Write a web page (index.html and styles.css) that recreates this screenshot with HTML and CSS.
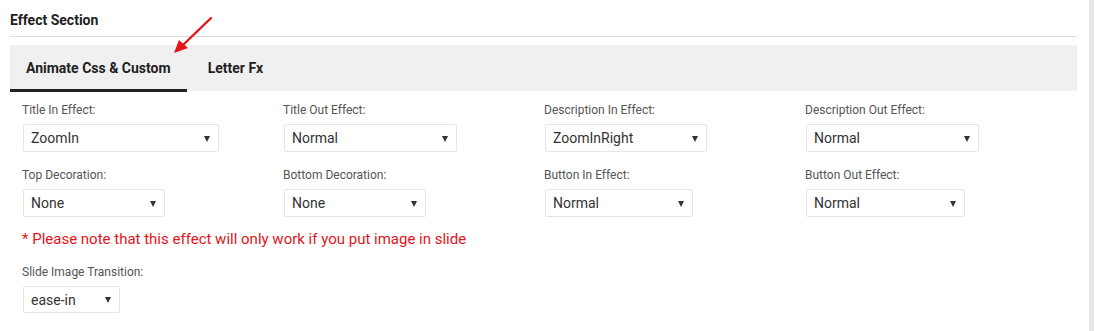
FILE: index.html
```html
<!DOCTYPE html>
<html lang="en">
<head>
    <meta charset="UTF-8">
    <meta name="viewport" content="width=device-width, initial-scale=1.0">
    <title>Effect Section</title>
    <link rel="stylesheet" href="styles.css">
</head>
<body>

<div class="page">
    <div class="panel">
        <h3 class="section-title">Effect Section</h3>

        <div class="tabs">
            <div class="tab active">Animate Css &amp; Custom</div>
            <div class="tab">Letter Fx</div>
        </div>

        <div class="fields">
            <div class="field">
                <label>Title In Effect:</label>
                <div class="select w196"><span>ZoomIn</span><i class="caret"></i></div>
            </div>
            <div class="field">
                <label>Title Out Effect:</label>
                <div class="select w173"><span>Normal</span><i class="caret"></i></div>
            </div>
            <div class="field">
                <label>Description In Effect:</label>
                <div class="select w162"><span>ZoomInRight</span><i class="caret"></i></div>
            </div>
            <div class="field">
                <label>Description Out Effect:</label>
                <div class="select w173"><span>Normal</span><i class="caret"></i></div>
            </div>

            <div class="field">
                <label>Top Decoration:</label>
                <div class="select w142"><span>None</span><i class="caret"></i></div>
            </div>
            <div class="field">
                <label>Bottom Decoration:</label>
                <div class="select w142"><span>None</span><i class="caret"></i></div>
            </div>
            <div class="field">
                <label>Button In Effect:</label>
                <div class="select w148"><span>Normal</span><i class="caret"></i></div>
            </div>
            <div class="field">
                <label>Button Out Effect:</label>
                <div class="select w159"><span>Normal</span><i class="caret"></i></div>
            </div>
        </div>

        <p class="note">* Please note that this effect will only work if you put image in slide</p>

        <div class="field single">
            <label>Slide Image Transition:</label>
            <div class="select w97"><span>ease-in</span><i class="caret"></i></div>
        </div>

        <!-- annotation arrow pointing at the active tab -->
        <svg class="pointer" width="60" height="50" viewBox="0 0 60 50">
            <line x1="51" y1="8" x2="22" y2="36" stroke="#e3151a" stroke-width="2.4" stroke-linecap="round"/>
            <polygon points="14,43 19,30 28,38" fill="#e3151a"/>
        </svg>
    </div>
    <div class="scrollbar"></div>
</div>

</body>
</html>
```

FILE: styles.css
```css
* {
    box-sizing: border-box;
}

body {
    font-family: Roboto, "Open Sans", sans-serif;
    margin: 0;
    background: #fff;
    color: #333;
}

.page {
    display: flex;
    height: 331px;
    overflow: hidden;
}

.panel {
    position: relative;
    flex: 1;
    padding: 0 12px 0 10px;
}

.scrollbar {
    width: 5px;
    background: #e6e6e6;
}

.section-title {
    font-size: 14px;
    font-weight: 700;
    color: #222;
    margin: 0;
    padding: 12px 0 8px;
    line-height: 16px;
    border-bottom: 1px solid #dcdcdc;
}

.tabs {
    display: flex;
    background: #f0f0f0;
    height: 46px;
    margin-top: 8px;
}

.tab {
    font-size: 14px;
    font-weight: 700;
    color: #222;
    line-height: 44px;
    padding: 0 16px;
    border-bottom: 3px solid transparent;
    height: 47px;
    padding-top: 1px;
}

.tab.active {
    border-bottom-color: #222;
}

.tab + .tab {
    padding-left: 21px;
}

.fields {
    display: grid;
    grid-template-columns: repeat(4, 261px);
    row-gap: 14px;
    padding: 10px 0 0 12px;
}

.field label {
    display: block;
    font-size: 12px;
    line-height: 18px;
    color: #555;
    margin-bottom: 5px;
}

.select {
    display: flex;
    align-items: center;
    justify-content: space-between;
    height: 28px;
    margin-left: 1px;
    padding: 0 8px 0 7px;
    border: 1px solid #e6e6e6;
    border-radius: 2px;
    font-size: 14px;
    color: #333;
    background: #fff;
}

.caret {
    width: 0;
    height: 0;
    border-left: 3.5px solid transparent;
    border-right: 3.5px solid transparent;
    border-top: 6px solid #333;
    margin-top: 1px;
}

.w196 { width: 196px; }
.w173 { width: 173px; }
.w162 { width: 162px; }
.w159 { width: 159px; }
.w148 { width: 148px; }
.w142 { width: 142px; }
.w97 { width: 97px; }

.note {
    font-size: 15px;
    line-height: 20px;
    color: #e3151a;
    margin: 12px 0 0 12px;
}

.single {
    margin: 14px 0 0 12px;
}

.single .select {
    height: 27px;
}

.pointer {
    position: absolute;
    left: 160px;
    top: 10px;
}
```
